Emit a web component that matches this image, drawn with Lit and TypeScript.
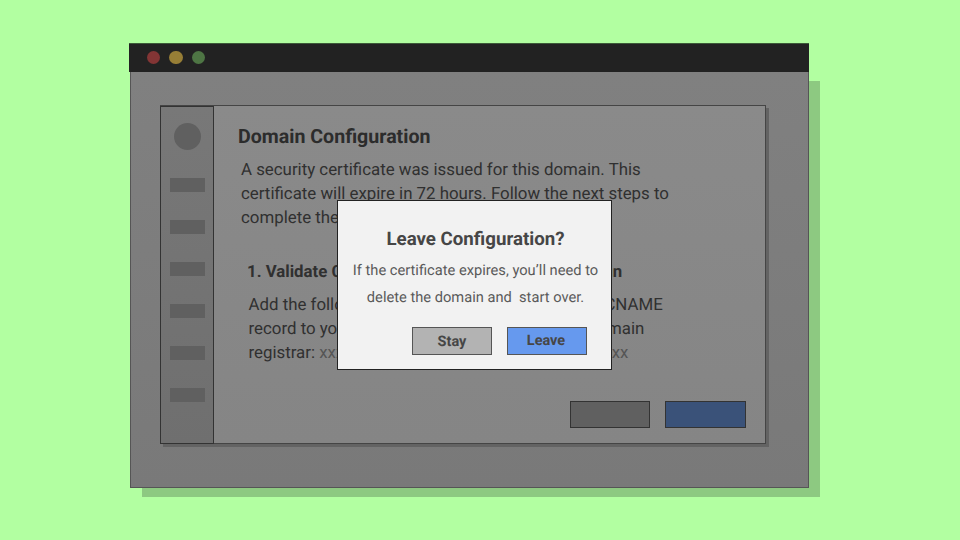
import { LitElement, html, css } from "lit";
import { customElement } from "lit/decorators.js";

@customElement("app-root")
export class AppRoot extends LitElement {
  static styles = css`
    :host {
      display: block;
      position: relative;
      width: 960px;
      height: 540px;
      overflow: hidden;
      background: #b2ffa1;
      font-family: Roboto, "Liberation Sans", sans-serif;
      text-rendering: geometricPrecision;
      box-sizing: border-box;
      padding: 43px 0 0 129px;
    }
    * { box-sizing: border-box; }
    .window {
      position: relative;
      z-index: 0;
      width: 680px;
      height: 445px;
      display: flex;
      flex-direction: column;
    }
    .titlebar {
      height: 29px;
      flex: none;
      background: #222;
      display: flex;
      align-items: center;
      gap: 9px;
      padding: 0 0 1px 18px;
      border-top: 1px solid #3c5a38;
    }
    .dot { width: 13.33px; height: 13.33px; border-radius: 50%; }
    .red { background: #833535; }
    .yellow { background: #977e36; }
    .green { background: #4e7544; }
    .body {
      flex: 1;
      margin-left: 1px;
      position: relative;
      background: linear-gradient(180deg, #808080, #797979);
      border: 1px solid #555;
      border-top: none;
      padding: 33px 42px 43px 29px;
      display: flex;
    }
    .body::before {
      content: "";
      position: absolute;
      left: 11px;
      right: -12px;
      top: 9px;
      bottom: -10px;
      background: #8dc981;
      z-index: -1;
    }
    .card {
      flex: 1;
      display: flex;
      position: relative;
      background: linear-gradient(180deg, #8a8a8a, #858585);
      border: 1px solid #454545;
      box-shadow: 3px 3px 0 #636363;
    }
    .side {
      width: 54px;
      flex: none;
      margin: 0 0 -1px -1px;
      background: linear-gradient(180deg, #787878, #6f6f6f);
      border: 1px solid #333;
      display: flex;
      flex-direction: column;
      align-items: center;
      padding: 16px 0 0 0;
    }
    .avatar { width: 27px; height: 27px; border-radius: 50%; background: #606060; margin-bottom: 28px; }
    .nav { width: 35px; height: 14px; background: #606060; margin-bottom: 28px; }
    .main { flex: 1; position: relative; padding: 18px 0 0 24px; color: #303030; }
    h1 { margin: 0; font-size: 19.6px; line-height: 25px; font-weight: 700; color: #2c2c2c; }
    .intro { margin: 9px 0 0 3px; font-size: 16.85px; line-height: 24px; width: 440px; }
    h2 { margin: 30px 0 0 9px; font-size: 16.8px; line-height: 24px; font-weight: 700; white-space: nowrap; }
    .step { margin: 9px 0 0 10.5px; font-size: 16.85px; line-height: 24px; width: 430px; }
    .line { white-space: nowrap; display: block; }
    .muted { color: #555; }
    .actions { position: absolute; right: 19px; bottom: 15px; display: flex; gap: 15px; }
    .btn { height: 27px; border: 1px solid #333; }
    .btn.gray { width: 80px; background: #606060; }
    .btn.blue { width: 81px; background: #3a5279; }
    .dialog {
      position: absolute;
      left: 337px;
      top: 200px;
      width: 275px;
      height: 170px;
      background: #f2f2f2;
      border: 1px solid #222;
      padding: 26px 0 0 2px;
      text-align: center;
      color: #444;
    }
    .dialog h3 { margin: 0; font-size: 18.7px; line-height: 24px; font-weight: 700; color: #464646; }
    .dialog p { margin: 6px 0 0; font-size: 14.66px; line-height: 27px; color: #5a5a5a; white-space: pre-line; }
    .dialog .row { display: flex; gap: 15px; justify-content: flex-end; padding-right: 24px; margin-top: 16px; }
    .dbtn {
      width: 80px;
      height: 28px;
      border: 1px solid #555;
      font-size: 14.5px;
      font-weight: 700;
      color: #464646;
      display: flex;
      align-items: center;
      justify-content: center;
    }
    .stay { background: #b3b3b3; }
    .stay span { position: relative; top: 0.5px; }
    .leave { background: #6699ee; }
    .leave span { position: relative; top: -0.5px; left: -1px; }
  `;

  render() {
    return html`
      <div class="window">
        <div class="titlebar">
          <div class="dot red"></div>
          <div class="dot yellow"></div>
          <div class="dot green"></div>
        </div>
        <div class="body">
          <div class="card">
            <div class="side">
              <div class="avatar"></div>
              ${[0, 1, 2, 3, 4, 5].map(() => html`<div class="nav"></div>`)}
            </div>
            <div class="main">
              <h1>Domain Configuration</h1>
              <p class="intro">
                <span class="line">A security certificate was issued for this domain. This</span>
                <span class="line">certificate will expire in 72 hours. Follow the next steps to</span>
                <span class="line">complete the configuration.</span>
              </p>
              <h2>1. Validate Certificate Ownership for Your Domain</h2>
              <p class="step">
                <span class="line">Add the following validated code as a new DNS CNAME</span>
                <span class="line">record to your DNS configuration across your domain</span>
                <span class="line">registrar: <span class="muted">xxxxxxxxxxxxxxxxxxxxxxxxxxxxxxxxxxxxx</span></span>
              </p>
              <div class="actions">
                <div class="btn gray"></div>
                <div class="btn blue"></div>
              </div>
            </div>
          </div>
        </div>
      </div>
      <div class="dialog">
        <h3>Leave Configuration?</h3>
        <p>If the certificate expires, you’ll need to
delete the domain and&nbsp; start over.</p>
        <div class="row">
          <div class="dbtn stay"><span>Stay</span></div>
          <div class="dbtn leave"><span>Leave</span></div>
        </div>
      </div>
    `;
  }
}
